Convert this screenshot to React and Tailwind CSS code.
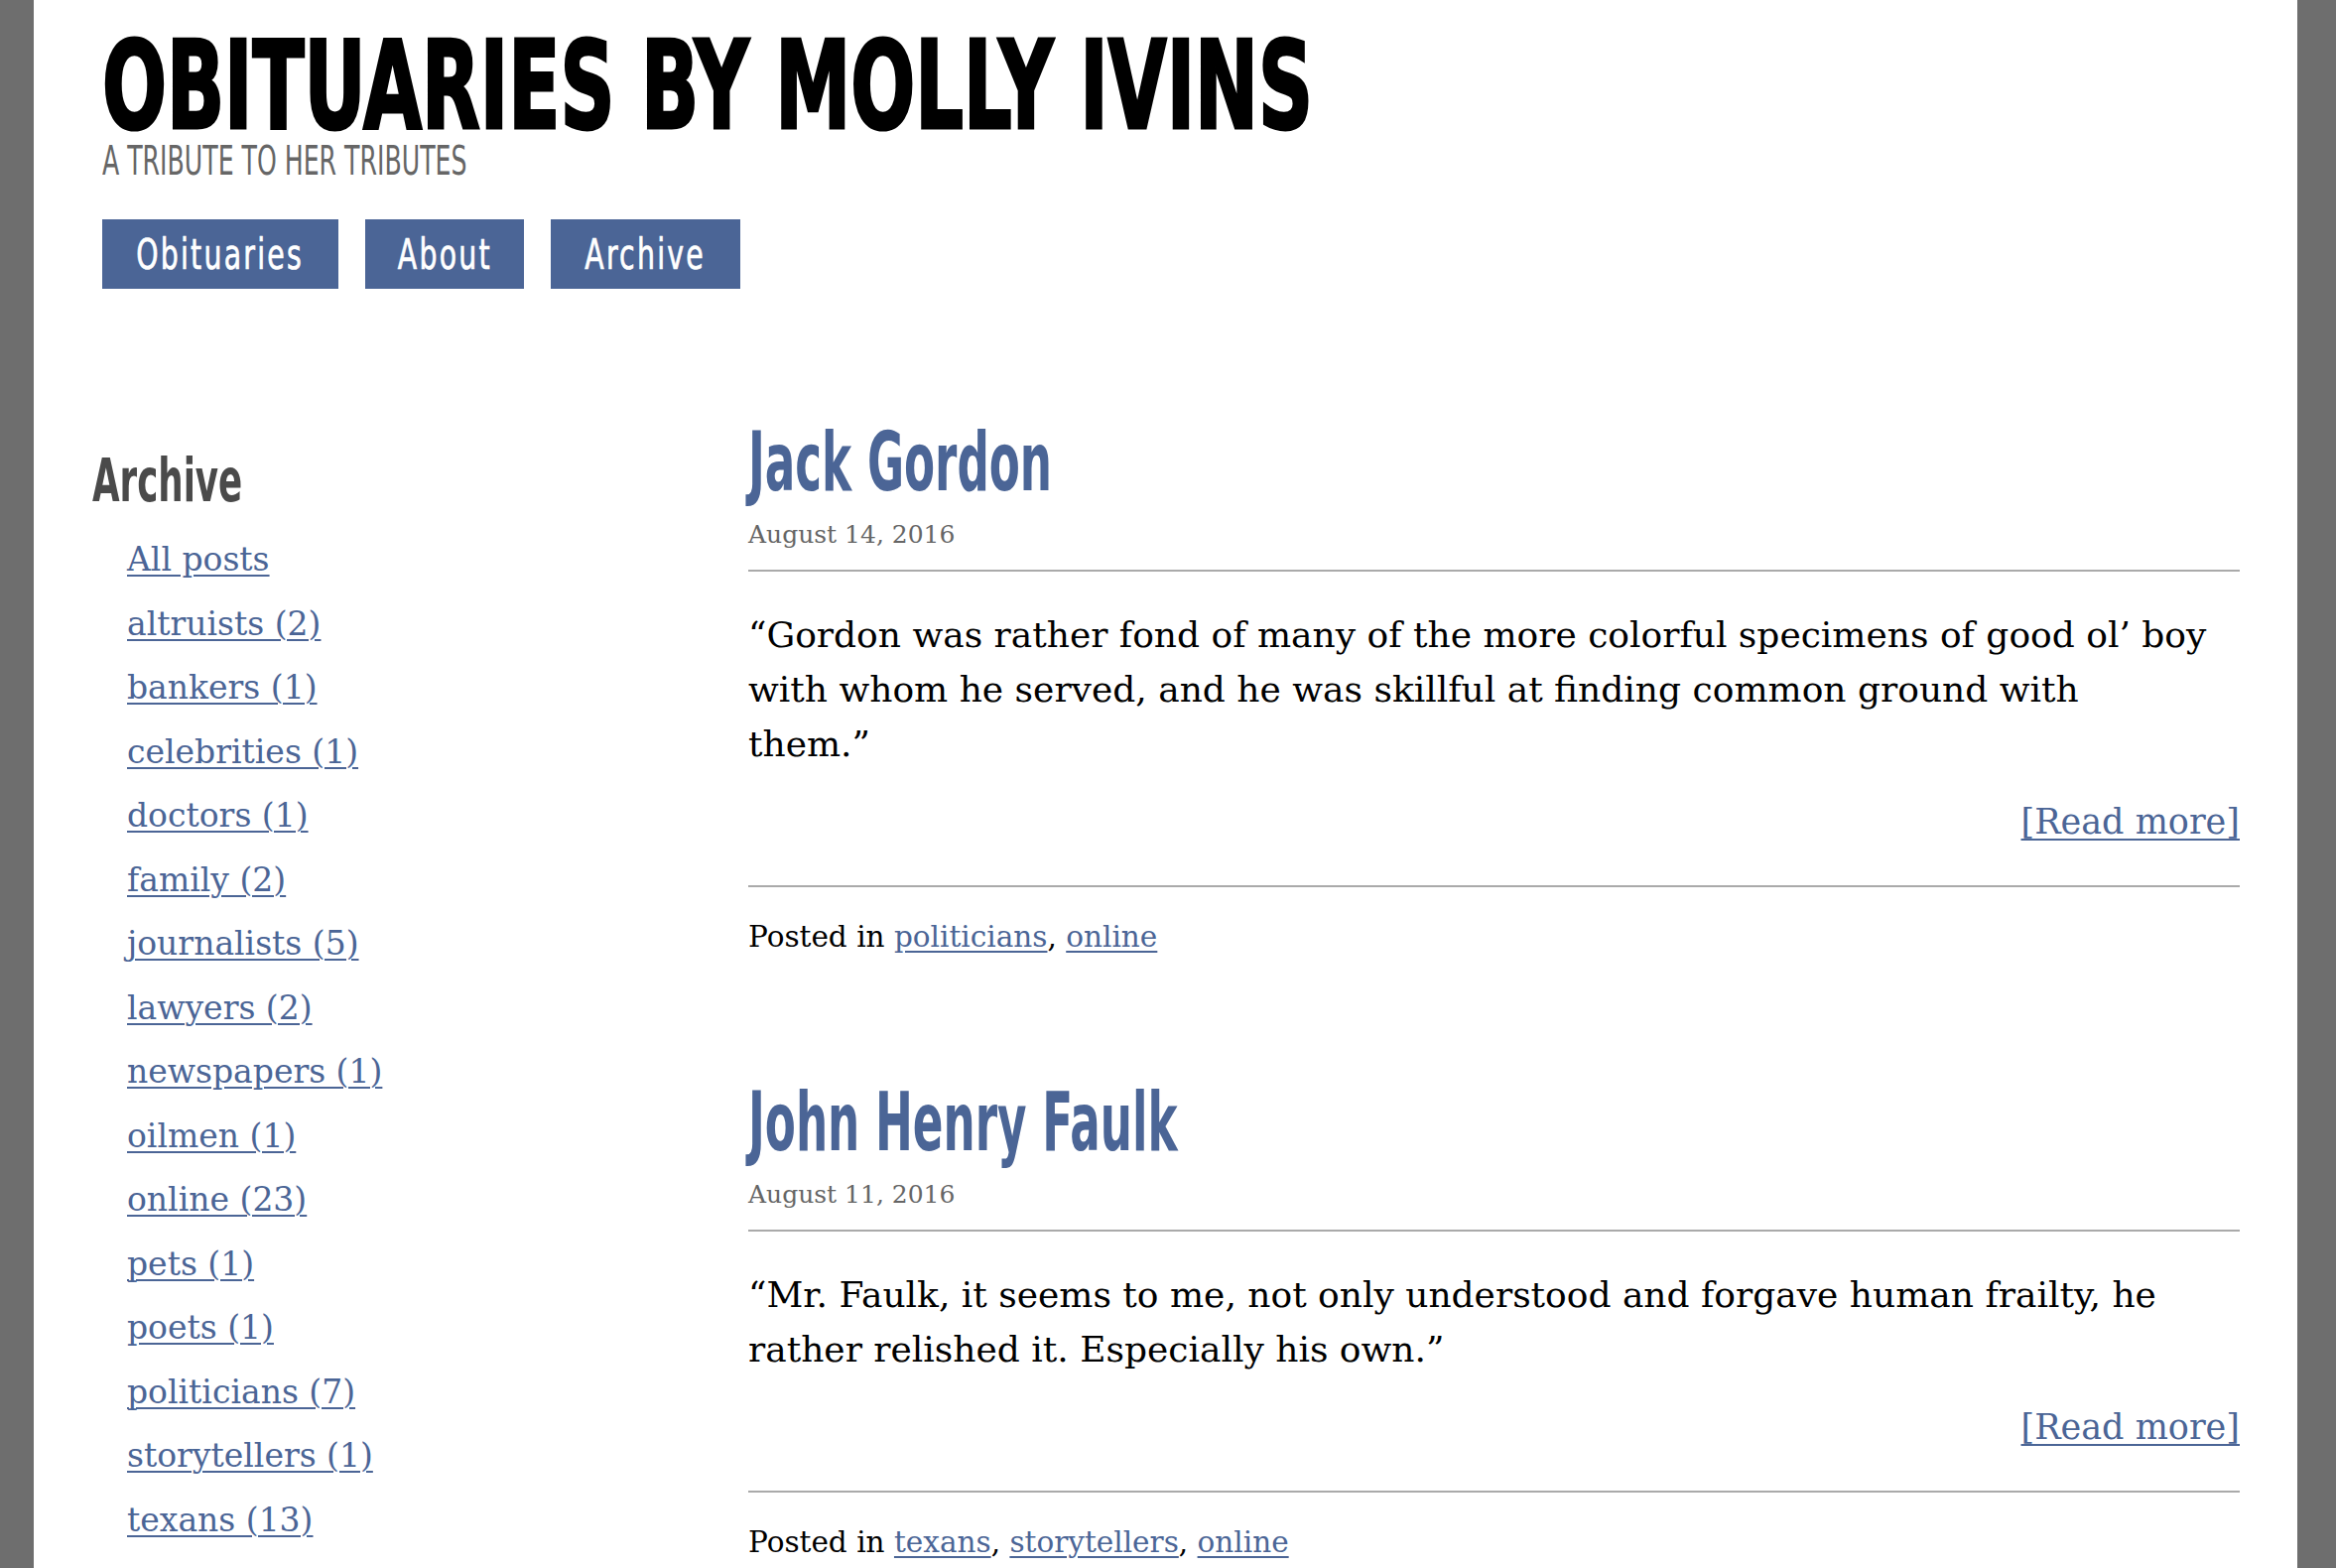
const serif = "font-[family-name:'DejaVu_Serif',serif]";
const narrow =
  "font-[family-name:'Liberation_Sans_Narrow','DejaVu_Sans_Condensed','Liberation_Sans',sans-serif]";

const archive = [
  "All posts",
  "altruists (2)",
  "bankers (1)",
  "celebrities (1)",
  "doctors (1)",
  "family (2)",
  "journalists (5)",
  "lawyers (2)",
  "newspapers (1)",
  "oilmen (1)",
  "online (23)",
  "pets (1)",
  "poets (1)",
  "politicians (7)",
  "storytellers (1)",
  "texans (13)",
];

// quote lines kept as in the original layout
const posts = [
  {
    title: "Jack Gordon",
    date: "August 14, 2016",
    quote: [
      "“Gordon was rather fond of many of the more colorful specimens of good ol’ boy",
      "with whom he served, and he was skillful at finding common ground with",
      "them.”",
    ],
    tags: ["politicians", "online"],
  },
  {
    title: "John Henry Faulk",
    date: "August 11, 2016",
    quote: [
      "“Mr. Faulk, it seems to me, not only understood and forgave human frailty, he",
      "rather relished it. Especially his own.”",
    ],
    tags: ["texans", "storytellers", "online"],
  },
];

const nav = [
  { label: "Obituaries", w: "w-[238px]" },
  { label: "About", w: "w-[160px]" },
  { label: "Archive", w: "w-[191px]" },
];

function Post({ post, first }) {
  return (
    <article className={first ? "" : "mt-[121px]"}>
      <h2 className={`${narrow} text-[82px] font-bold leading-[90px] text-[#4b6596]`}>
        <span className="inline-block origin-left scale-x-[0.613] whitespace-nowrap">{post.title}</span>
      </h2>
      <div className={`${serif} mt-[10px] text-[25px] leading-[36px] text-[#666]`}>
        {post.date}
      </div>
      <hr className="mt-[17px] border-t-2 border-[#aaa]" />
      <p className={`${serif} mt-[36px] text-[36px] leading-[55px] text-black`}>
        {post.quote.map((line, i) => (
          <span key={i}>
            {line}
            {i < post.quote.length - 1 && <br />}
          </span>
        ))}
      </p>
      <div className={`${serif} mt-[24px] text-right text-[35px] leading-[55px]`}>
        <a href="#" className="text-[#4b6596] underline decoration-2 underline-offset-[5px]">
          [Read more]
        </a>
      </div>
      <hr className="mt-[36px] border-t-2 border-[#aaa]" />
      <p className={`${serif} mt-[29px] text-[29.5px] leading-[42px] text-black`}>
        Posted in{" "}
        {post.tags.map((t, i) => (
          <span key={t}>
            <a href="#" className="text-[#4b6596] underline decoration-2 underline-offset-[4px]">
              {t}
            </a>
            {i < post.tags.length - 1 ? ", " : ""}
          </span>
        ))}
      </p>
    </article>
  );
}

export default function App() {
  return (
    <div className="min-h-screen bg-[#6e6e6e] pl-[34px] pr-[39px]">
      <div className="min-h-[1580px] overflow-hidden bg-white">
        <header className="px-[69px] pt-[32px]">
          <h1
            className={`${narrow} text-[123px] font-bold leading-[110px] text-black [-webkit-text-stroke:3px_black]`}
          >
            <span className="inline-block origin-left scale-x-[0.69] whitespace-nowrap">
              OBITUARIES BY MOLLY IVINS
            </span>
          </h1>
          <div className={`${narrow} text-[40px] leading-[40px] text-[#666]`}>
            <span className="inline-block origin-left scale-x-[0.7] whitespace-nowrap">
              A TRIBUTE TO HER TRIBUTES
            </span>
          </div>
          <nav className="mt-[39px] flex gap-[27px]">
            {nav.map((n) => (
              <a
                key={n.label}
                href="#"
                className={`${narrow} ${n.w} flex h-[70px] items-center justify-center bg-[#4b6596] text-[42px] tracking-[3px] text-white [-webkit-text-stroke:0.7px_white]`}
              >
                <span className="inline-block scale-x-[0.75]">{n.label}</span>
              </a>
            ))}
          </nav>
        </header>

        <div className="mt-[130px] flex pl-[59px] pr-[58px]">
          <aside className="w-[661px] shrink-0">
            <h3 className={`${narrow} mt-[30px] text-[60px] font-bold leading-[66px] text-[#4a4a4a]`}>
              <span className="inline-block origin-left scale-x-[0.66]">Archive</span>
            </h3>
            <ul className={`${serif} mt-[15px] pl-[35px] text-[33px]`}>
              {archive.map((a) => (
                <li key={a} className="leading-[64.5px]">
                  <a href="#" className="text-[#4b6596] underline decoration-2 underline-offset-[4px]">
                    {a}
                  </a>
                </li>
              ))}
            </ul>
          </aside>
          <main className="w-[1503px] shrink-0">
            {posts.map((p, i) => (
              <Post key={p.title} post={p} first={i === 0} />
            ))}
          </main>
        </div>
      </div>
    </div>
  );
}
